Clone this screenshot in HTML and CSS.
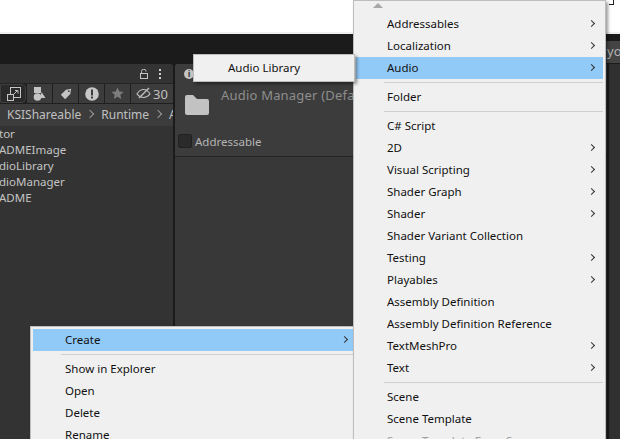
FILE: index.html
```html
<!DOCTYPE html>
<html lang="en">
<head>
    <meta charset="UTF-8">
    <title>Unity Create Menu</title>
    <link rel="stylesheet" href="styles.css">
</head>
<body>
    <div class="top-white"><span class="corner-mark"></span></div>
    <div class="dark-band"><span class="band-text">yo</span></div>
    <div class="workspace">
        <div class="project-panel">
            <div class="panel-tab">
                <svg class="lock-icon" width="8" height="10" viewBox="0 0 8 10"><path d="M1.500 5V2.500a2.300 2.300 0 0 1 4.600 0" fill="none" stroke="#c4c4c4"/><rect x="0.500" y="4.500" width="7" height="5" fill="none" stroke="#c4c4c4"/></svg>
                <div class="dots"><i></i><i></i><i></i></div>
            </div>
            <div class="toolbar">
                <div class="tool tool-search">
                    <svg width="14" height="14" viewBox="0 0 14 14"><rect x="3.500" y="0.500" width="10" height="10" fill="none" stroke="#c4c4c4"/><rect x="0.500" y="7.500" width="6" height="6" fill="#333" stroke="#c4c4c4"/><path d="M6.500 7.500l4-4M8 3.500h3v3" fill="none" stroke="#c4c4c4"/></svg>
                </div>
                <div class="tool">
                    <svg width="13" height="14" viewBox="0 0 13 14"><rect x="1" y="0" width="7" height="6" fill="#c4c4c4"/><circle cx="4.500" cy="10" r="3.800" fill="#c4c4c4"/><path d="M8.500 5l4 6H7z" fill="#c4c4c4"/></svg>
                </div>
                <div class="tool">
                    <svg width="12" height="12" viewBox="0 0 14 14"><path d="M1 8l6-6 6-1-1 6-6 6z" fill="#c4c4c4"/><circle cx="10.300" cy="3.700" r="1" fill="#3c3c3c"/></svg>
                </div>
                <div class="tool">
                    <svg width="14" height="14" viewBox="0 0 14 14"><circle cx="7" cy="7" r="6.800" fill="#c8c8c8"/><rect x="6" y="2.500" width="2" height="6" fill="#3c3c3c"/><rect x="6" y="9.500" width="2" height="2" fill="#3c3c3c"/></svg>
                </div>
                <div class="tool">
                    <svg width="13" height="13" viewBox="0 0 13 13"><path d="M6.500 0.500l1.800 4 4.200.4-3.200 2.800 1 4.300-3.800-2.300-3.800 2.300 1-4.300L.5 4.900l4.200-.4z" fill="#7d7d7d"/></svg>
                </div>
                <div class="tool tool-hidden">
                    <svg width="15" height="13" viewBox="0 0 15 13"><path d="M1 7c2-3.500 4-4.500 6.500-4.500S12 3.500 14 7c-2 2.500-4 3.500-6.500 3.500S3 9.500 1 7z" fill="none" stroke="#bdbdbd" stroke-width="1.200"/><path d="M3 11L13 1" stroke="#bdbdbd" stroke-width="1.400"/></svg>
                    <span>30</span>
                </div>
            </div>
            <div class="breadcrumb">
                <span class="crumb">KSIShareable</span>
                <span class="chevron"></span>
                <span class="crumb">Runtime</span>
                <span class="chevron"></span>
                <span class="crumb">A</span>
            </div>
            <ul class="file-list">
                <li>tor</li>
                <li>ADMEImage</li>
                <li>dioLibrary</li>
                <li>dioManager</li>
                <li>ADME</li>
            </ul>
        </div>
        <div class="inspector-panel">
            <div class="inspector-head">
                <div class="info-tab"><span class="info-icon">i</span></div>
                <div class="asset-row">
                    <svg class="folder-icon" width="24" height="20" viewBox="0 0 24 20"><path d="M0 2a2 2 0 0 1 2-2h6l4 4h10a2 2 0 0 1 2 2v12a2 2 0 0 1-2 2H2a2 2 0 0 1-2-2z" fill="#c2c2c2"/></svg>
                    <span class="asset-name">Audio Manager (Default)</span>
                </div>
                <div class="addressable-row">
                    <span class="checkbox"></span>
                    <span>Addressable</span>
                </div>
            </div>
        </div>
        <div class="far-panel"></div>
    </div>

    <div class="menu menu-context">
        <div class="item active">Create<span class="arrow"></span></div>
        <div class="sep"></div>
        <div class="item">Show in Explorer</div>
        <div class="item">Open</div>
        <div class="item">Delete</div>
        <div class="item">Rename</div>
    </div>

    <div class="menu menu-create">
        <div class="scroll-up"></div>
        <div class="item">Addressables<span class="arrow"></span></div>
        <div class="item">Localization<span class="arrow"></span></div>
        <div class="item active">Audio<span class="arrow"></span></div>
        <div class="sep"></div>
        <div class="item">Folder</div>
        <div class="sep"></div>
        <div class="item">C# Script</div>
        <div class="item">2D<span class="arrow"></span></div>
        <div class="item">Visual Scripting<span class="arrow"></span></div>
        <div class="item">Shader Graph<span class="arrow"></span></div>
        <div class="item">Shader<span class="arrow"></span></div>
        <div class="item">Shader Variant Collection</div>
        <div class="item">Testing<span class="arrow"></span></div>
        <div class="item">Playables<span class="arrow"></span></div>
        <div class="item">Assembly Definition</div>
        <div class="item">Assembly Definition Reference</div>
        <div class="item">TextMeshPro<span class="arrow"></span></div>
        <div class="item">Text<span class="arrow"></span></div>
        <div class="sep"></div>
        <div class="item">Scene</div>
        <div class="item">Scene Template</div>
        <div class="item disabled">Scene Template From Scene</div>
    </div>

    <div class="menu menu-audio">
        <div class="item">Audio Library</div>
    </div>
</body>
</html>
```

FILE: styles.css
```css
* {
    box-sizing: border-box;
}
html, body {
    margin: 0;
    height: 100%;
}
body {
    position: relative;
    width: 620px;
    height: 439px;
    overflow: hidden;
    background-color: #333;
    font-family: "Noto Sans", Arial, sans-serif;
    font-size: 11.5px;
}

/* window behind the editor */
.top-white {
    position: relative;
    height: 34px;
    background-color: #fff;
    border-bottom: 2px solid #f0f0f0;
}
.corner-mark {
    position: absolute;
    left: 609px;
    top: 0;
    width: 5px;
    height: 5px;
    border-right: 1px solid #222;
    border-bottom: 1px solid #222;
}
.dark-band {
    position: relative;
    height: 30px;
    background-color: #1b1b1b;
}
.band-text {
    position: absolute;
    left: 600px;
    top: 7px;
    width: 20px;
    height: 22px;
    padding-left: 7px;
    background-color: #444;
    font-size: 13px;
    line-height: 20px;
    color: #b4b4b4;
    overflow: hidden;
}

.workspace {
    display: flex;
    height: 375px;
    background-color: #1b1b1b;
}
.project-panel {
    width: 173px;
    background-color: #333;
    border-top-right-radius: 3px;
    overflow: hidden;
}
.inspector-panel {
    width: 432px;
    margin-left: 2px;
    background-color: #383838;
    border-top-left-radius: 3px;
    overflow: hidden;
}
.far-panel {
    flex: 1;
    margin-left: 2px;
    background-color: #303030;
}

.panel-tab {
    display: flex;
    align-items: center;
    justify-content: flex-end;
    gap: 11px;
    height: 19px;
    padding-right: 12px;
    background-color: #333;
}
.dots {
    display: flex;
    flex-direction: column;
    gap: 2px;
}
.dots i {
    display: block;
    width: 2px;
    height: 2px;
    background-color: #d0d0d0;
}

.toolbar {
    display: flex;
    gap: 1px;
    height: 21px;
    padding-bottom: 1px;
    background-color: #1f1f1f;
    border-top: 1px solid #232323;
}
.tool {
    display: flex;
    align-items: center;
    justify-content: center;
    width: 25px;
    background-color: #3c3c3c;
}
.tool-search {
    width: 26px;
    justify-content: flex-end;
    padding-right: 4px;
    background-color: #2a2a2a;
    border: 1px solid #3f3f3f;
    border-radius: 0 4px 4px 0;
}
.tool-hidden {
    flex: 1;
    gap: 2px;
    color: #c0c0c0;
    font-size: 13px;
}

.breadcrumb {
    display: flex;
    align-items: center;
    gap: 8px;
    height: 22px;
    padding: 0 0 2px 7px;
    background-color: #3c3c3c;
    color: #c0c0c0;
    font-size: 12px;
    white-space: nowrap;
}
.chevron {
    flex: none;
    width: 6px;
    height: 6px;
    margin-left: -2px;
    border-top: 1px solid #9a9a9a;
    border-right: 1px solid #9a9a9a;
    transform: rotate(45deg);
}

.file-list {
    margin: 0 0 0 -1px;
    padding: 0;
    list-style: none;
    color: #c4c4c4;
    font-size: 11.5px;
}
.file-list li {
    height: 16px;
    line-height: 16px;
    white-space: nowrap;
}

.inspector-head {
    height: 93px;
    background-color: #3c3c3c;
    border-bottom: 1px solid #242424;
}
.info-tab {
    display: flex;
    align-items: center;
    height: 19px;
    padding-left: 9px;
}
.info-icon {
    width: 10px;
    height: 10px;
    border-radius: 50%;
    background-color: #c4c4c4;
    color: #3c3c3c;
    font-size: 9px;
    font-weight: bold;
    line-height: 10px;
    text-align: center;
}
.asset-row {
    display: flex;
    align-items: flex-start;
    gap: 12px;
    height: 39px;
    padding: 3px 0 0 10px;
    white-space: nowrap;
}
.folder-icon {
    margin-top: 9px;
}
.asset-name {
    color: #8e8e8e;
    font-size: 13px;
    letter-spacing: 0.2px;
}
.addressable-row {
    display: flex;
    align-items: center;
    gap: 3px;
    height: 31px;
    padding: 7px 0 0 3px;
    color: #b4b4b4;
}
.checkbox {
    width: 14px;
    height: 14px;
    background-color: #2a2a2a;
    border: 1px solid #212121;
    border-radius: 2px;
}

/* popup menus */
.menu {
    position: absolute;
    padding: 2px;
    background-color: #f0f0f0;
    border: 1px solid #bdbdbd;
    box-shadow: 2px 2px 3px rgba(0, 0, 0, 0.4);
    color: #111;
    font-size: 11.5px;
}
.item {
    position: relative;
    height: 22px;
    padding-left: 32px;
    line-height: 22px;
    white-space: nowrap;
}
.menu-create .item {
    padding-left: 31px;
}
.item.active {
    background-color: #91c9f7;
}
.item.disabled {
    color: #a0a0a0;
}
.arrow {
    position: absolute;
    right: 9px;
    top: 8px;
    width: 5px;
    height: 5px;
    border-top: 1px solid #333;
    border-right: 1px solid #333;
    transform: rotate(45deg);
}
.sep {
    height: 7px;
    margin-left: 28px;
    padding-top: 3px;
}
.sep::before {
    content: "";
    display: block;
    height: 1px;
    background-color: #d0d0d0;
}
.scroll-up {
    width: 0;
    height: 0;
    margin: 0 0 5px 17px;
    border-left: 5px solid transparent;
    border-right: 5px solid transparent;
    border-bottom: 5px solid #a8a8a8;
    box-sizing: content-box;
}

.menu-create {
    left: 353px;
    top: 0;
    width: 253px;
    height: 460px;
}
.menu-context {
    left: 30px;
    top: 326px;
    width: 340px;
    height: 130px;
}
.menu-context .arrow {
    right: 20px;
}
.menu-audio {
    left: 193px;
    top: 54px;
    width: 162px;
    height: 28px;
}
```
